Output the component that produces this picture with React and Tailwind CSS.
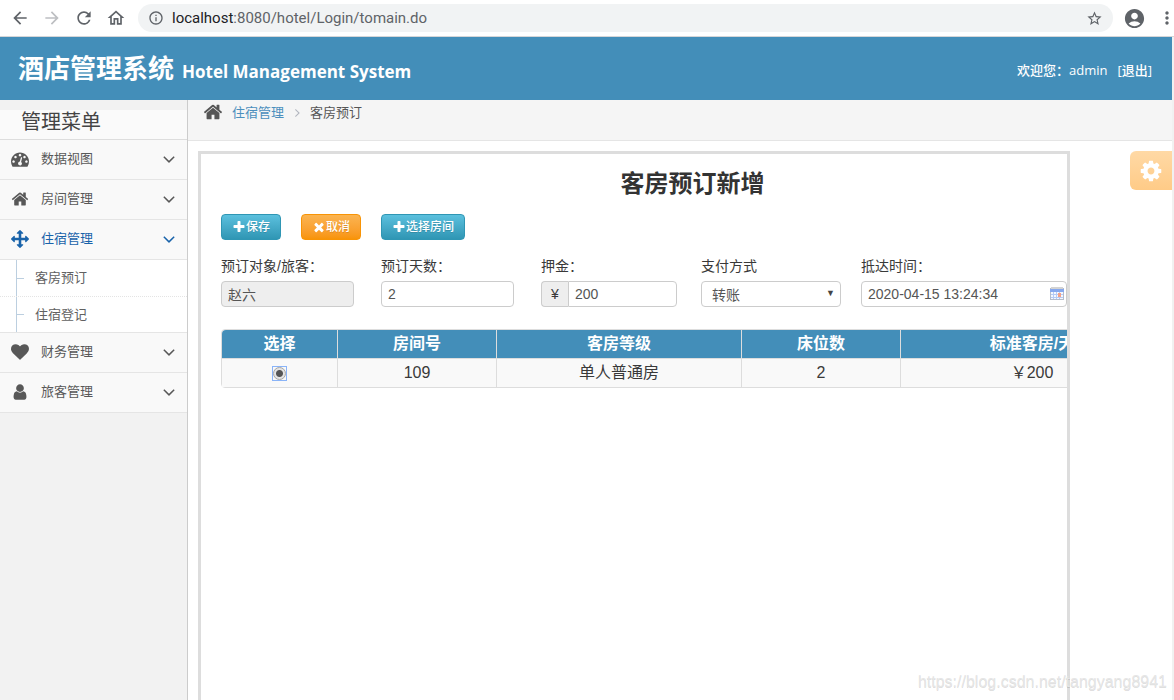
import React from "react";
import {
    MdAccountCircle,
    MdArrowBack,
    MdArrowForward,
    MdInfoOutline,
    MdMoreVert,
    MdOutlineHome,
    MdRefresh,
    MdStarBorder,
} from "react-icons/md";

const icons = {
    dashboard:
        "M384 1152q0-53-37.5-90.5t-90.5-37.5-90.5 37.5-37.5 90.5 37.5 90.5 90.5 37.5 90.5-37.5 37.5-90.5zm192-448q0-53-37.5-90.5t-90.5-37.5-90.5 37.5-37.5 90.5 37.5 90.5 90.5 37.5 90.5-37.5 37.5-90.5zm428 481l101-382q6-26-7.5-48.5t-38.5-29.5-48 6.5-30 39.5l-101 382q-60 5-107 43.5t-63 98.5q-20 77 20 146t117 89 146-20 89-117q16-60-6-117t-72-91zm660-33q0-53-37.5-90.5t-90.5-37.5-90.5 37.5-37.5 90.5 37.5 90.5 90.5 37.5 90.5-37.5 37.5-90.5zm-640-640q0-53-37.5-90.5t-90.5-37.5-90.5 37.5-37.5 90.5 37.5 90.5 90.5 37.5 90.5-37.5 37.5-90.5zm448 192q0-53-37.5-90.5t-90.5-37.5-90.5 37.5-37.5 90.5 37.5 90.5 90.5 37.5 90.5-37.5 37.5-90.5zm320 448q0 261-141 483-19 29-54 29h-1402q-35 0-54-29-141-221-141-483 0-182 71-348t191-286 286-191 348-71 348 71 286 191 191 286 71 348z",
    home: "M1472 992v480q0 26-19 45t-45 19h-384v-384h-256v384h-384q-26 0-45-19t-19-45v-480q0-1 .5-3t.5-3l575-474 575 474q1 2 1 6zm223-69l-62 74q-8 9-21 11h-3q-13 0-21-7l-692-577-692 577q-12 8-24 7-13-2-21-11l-62-74q-8-10-7-23.5t11-21.5l719-599q32-26 76-26t76 26l244 204v-195q0-14 9-23t23-9h192q14 0 23 9t9 23v408l219 182q10 8 11 21.5t-7 23.5z",
    arrows: "M1792 896q0 26-19 45l-256 256q-19 19-45 19t-45-19-19-45v-128h-384v384h128q26 0 45 19t19 45-19 45l-256 256q-19 19-45 19t-45-19l-256-256q-19-19-19-45t19-45 45-19h128v-384h-384v128q0 26-19 45t-45 19-45-19l-256-256q-19-19-19-45t19-45l256-256q19-19 45-19t45 19 19 45v128h384v-384h-128q-26 0-45-19t-19-45 19-45l256-256q19-19 45-19t45 19l256 256q19 19 19 45t-19 45-45 19h-128v384h384v-128q0-26 19-45t45-19 45 19l256 256q19 19 19 45z",
    heart: "M896 1664q-26 0-44-18l-624-602q-10-8-27.5-26t-55.5-65.5-68-97.5-53.5-121-23.5-138q0-220 127-344t351-124q62 0 126.5 21.5t120 58 95.5 68.5 76 68q36-36 76-68t95.5-68.5 120-58 126.5-21.5q224 0 351 124t127 344q0 221-229 450l-623 600q-18 18-44 18z",
    user: "M1536 1399q0 109-62.5 187t-150.5 78h-854q-88 0-150.5-78t-62.5-187q0-85 8.5-160.5t31.5-152 58.5-131 94-89 134.5-34.5q131 128 313 128t313-128q76 0 134.5 34.5t94 89 58.5 131 31.5 152 8.5 160.5zm-256-887q0 159-112.5 271.5t-271.5 112.5-271.5-112.5-112.5-271.5 112.5-271.5 271.5-112.5 271.5 112.5 112.5 271.5z",
    cog: "M1152 896q0-106-75-181t-181-75-181 75-75 181 75 181 181 75 181-75 75-181zm512-109v222q0 12-8 23t-20 13l-185 28q-19 54-39 91 35 50 107 138 10 12 10 25t-9 23q-27 37-99 108t-94 71q-12 0-26-9l-138-108q-44 23-91 38-16 136-29 186-7 28-36 28h-222q-14 0-24.5-8.5t-11.5-21.5l-28-184q-49-16-90-37l-141 107q-10 9-25 9-14 0-25-11-126-114-165-168-7-10-7-23 0-12 8-23 15-21 51-66.5t54-70.5q-27-50-41-99l-183-27q-13-2-21-12.5t-8-23.5v-222q0-12 8-23t19-13l186-28q14-46 39-92-40-57-107-138-10-12-10-24 0-10 9-23 26-36 98.5-107.5t94.5-71.5q13 0 26 10l138 107q44-23 91-38 16-136 29-186 7-28 36-28h222q14 0 24.5 8.5t11.5 21.5l28 184q49 16 90 37l142-107q9-9 24-9 13 0 25 10 129 119 165 170 7 8 7 22 0 12-8 23-15 21-51 66.5t-54 70.5q26 50 41 98l183 28q13 2 21 12.5t8 23.5z",
    plus: "M1600 736v192q0 40-28 68t-68 28h-416v416q0 40-28 68t-68 28h-192q-40 0-68-28t-28-68v-416h-416q-40 0-68-28t-28-68v-192q0-40 28-68t68-28h416v-416q0-40 28-68t68-28h192q40 0 68 28t28 68v416h416q40 0 68 28t28 68z",
    times: "M1490 1322q0 40-28 68l-136 136q-28 28-68 28t-68-28l-294-294-294 294q-28 28-68 28t-68-28l-136-136q-28-28-28-68t28-68l294-294-294-294q-28-28-28-68t28-68l136-136q28-28 68-28t68 28l294 294 294-294q28-28 68-28t68 28l136 136q28 28 28 68t-28 68l-294 294 294 294q28 28 28 68z",
    angleDown:
        "M1395 736q0 13-10 23l-466 466q-10 10-23 10t-23-10l-466-466q-10-10-10-23t10-23l50-50q10-10 23-10t23 10l393 393 393-393q10-10 23-10t23 10l50 50q10 10 10 23z",
};

const menus = [
    { name: "数据视图", icon: "dashboard" },
    { name: "房间管理", icon: "home" },
    {
        name: "住宿管理",
        icon: "arrows",
        open: true,
        children: ["客房预订", "住宿登记"],
    },
    { name: "财务管理", icon: "heart" },
    { name: "旅客管理", icon: "user" },
];

const Icon = ({ name, className }) => (
    <svg
        viewBox="0 0 1792 1792"
        fill="currentColor"
        aria-hidden="true"
        className={`shrink-0 ${className}`}
    >
        <path d={icons[name]} />
    </svg>
);

const BrowserBar = () => (
    <div className="flex h-[37px] shrink-0 items-center border-b border-[#d5d6d8] bg-white pl-2.5 text-[#5f6368]">
        <div className="flex gap-3">
            <button aria-label="后退"><MdArrowBack size={20} /></button>
            <button aria-label="前进" className="text-[#bdbfc2]"><MdArrowForward size={20} /></button>
            <button aria-label="刷新"><MdRefresh size={20} /></button>
            <button aria-label="主页"><MdOutlineHome size={20} /></button>
        </div>
        <div className="ml-3 flex h-7 flex-1 items-center rounded-full bg-[#f1f3f4] pr-2.5 pl-2.5">
            <MdInfoOutline size={16} />
            <p className="ml-2 flex-1 font-[Roboto,sans-serif] text-[15px]">
                <span className="text-[#202124]">localhost</span>
                :8080/hotel/Login/tomain.do
            </p>
            <button aria-label="收藏"><MdStarBorder size={17} /></button>
        </div>
        <MdAccountCircle size={23} className="ml-2.5" />
        <button aria-label="更多" className="ml-3.5 flex w-3.5 justify-center">
            <MdMoreVert size={20} className="shrink-0" />
        </button>
    </div>
);

const Header = () => (
    <header className="flex h-[63px] shrink-0 items-center justify-between bg-[#438eb9] pr-5 pl-[18px] text-white">
        <h1 className="flex items-baseline gap-2 font-bold">
            <span className="text-[26px]">酒店管理系统</span>
            <span className="text-[17px]">Hotel Management System</span>
        </h1>
        <p className="mt-1 flex gap-2.5 text-[13px] font-medium">
            <span>欢迎您：admin</span>
            <a href="#logout">[退出]</a>
        </p>
    </header>
);

const Sidebar = () => (
    <aside className="w-[188px] shrink-0 border-r border-[#ccc] bg-[#f2f2f2] pt-2.5 text-[13px] text-[#585858]">
        <h2 className="flex h-[30px] items-center border-b border-[#ddd] bg-[#fafafa] pb-1.5 pl-[21px] text-xl text-[#444]">
            管理菜单
        </h2>
        <nav>
            {menus.map((menu) => (
                <div key={menu.name} className="border-b border-[#e5e5e5]">
                    <button
                        className={`flex h-[39px] w-full items-center bg-[#f9f9f9] pr-2 pb-0.5 pl-[11px] ${menu.open ? "text-[#1963aa]" : ""}`}
                    >
                        <Icon name={menu.icon} className="size-[18px]" />
                        <span className="ml-3 flex-1 text-left">{menu.name}</span>
                        <Icon name="angleDown" className="size-5" />
                    </button>
                    {/* Submenu */}
                    {menu.children && (
                        <ul className="border-t border-[#e5e5e5] bg-white text-[#616161]">
                            {menu.children.map((child) => (
                                <li
                                    key={child}
                                    className="flex h-9 border-t border-dotted border-[#e4e4e4] pl-4 first:border-none"
                                >
                                    <a
                                        href="#menu"
                                        className="flex items-center border-l border-[#bccfe0]"
                                    >
                                        <span className="mr-[11px] w-[7px] border-t border-[#bccfe0]" />
                                        {child}
                                    </a>
                                </li>
                            ))}
                        </ul>
                    )}
                </div>
            ))}
        </nav>
    </aside>
);

const Field = ({ id, label, children }) => (
    <div>
        <label htmlFor={id} className="block h-[25px] text-sm leading-5">
            {label}
        </label>
        {children}
    </div>
);

const inputStyle =
    "h-[26px] rounded-sm border border-[#ccc] px-1.5 text-sm text-[#555]";
const buttonStyle =
    "flex h-[26px] items-center justify-center rounded-sm border text-xs font-medium text-white text-shadow-2xs";
const infoStyle =
    "border-[#2f96b4] bg-linear-to-b from-[#5bc0de] to-[#2f96b4]";

const BookingForm = () => (
    <form className="w-[943px] text-[#393939]">
        <h2 className="pt-3 text-center text-2xl leading-9 font-bold text-[#333]">
            客房预订新增
        </h2>
        <div className="mt-3 flex gap-5">
            <button type="button" className={`${buttonStyle} ${infoStyle} w-[60px]`}>
                <Icon name="plus" className="size-3.5" />
                保存
            </button>
            <button
                type="button"
                className={`${buttonStyle} w-[60px] border-[#f89406] bg-linear-to-b from-[#fbb450] to-[#f89406]`}
            >
                <Icon name="times" className="size-3.5" />
                取消
            </button>
            <button type="button" className={`${buttonStyle} ${infoStyle} w-[84px]`}>
                <Icon name="plus" className="size-3.5" />
                选择房间
            </button>
        </div>

        <div className="mt-4 grid grid-cols-[repeat(4,160px)_auto]">
            <Field id="guest" label="预订对象/旅客：">
                <input
                    id="guest"
                    readOnly
                    value="赵六"
                    className={`${inputStyle} w-[133px] bg-[#eee]`}
                />
            </Field>
            <Field id="days" label="预订天数：">
                <input id="days" defaultValue="2" className={`${inputStyle} w-[133px]`} />
            </Field>
            <Field id="deposit" label="押金：">
                <div className="flex">
                    <span className="flex h-[26px] w-[27px] items-center justify-center rounded-l-sm border border-r-0 border-[#ccc] bg-[#eee] text-sm">
                        ¥
                    </span>
                    <input
                        id="deposit"
                        defaultValue="200"
                        className={`${inputStyle} w-[109px] rounded-l-none`}
                    />
                </div>
            </Field>
            <Field id="payment" label="支付方式">
                <div className="relative w-[140px]">
                    <select
                        id="payment"
                        className={`${inputStyle} w-full appearance-none bg-white px-2.5 pt-0.5`}
                    >
                        <option>转账</option>
                    </select>
                    <span className="pointer-events-none absolute top-1.5 right-1.5 text-[9px] leading-3 text-[#444]">
                        ▼
                    </span>
                </div>
            </Field>
            <Field id="arrival" label="抵达时间：">
                <div className="relative w-[206px]">
                    <input
                        id="arrival"
                        defaultValue="2020-04-15 13:24:34"
                        className={`${inputStyle} w-full`}
                    />
                    <svg
                        viewBox="0 0 14 13"
                        aria-hidden="true"
                        className="absolute top-1.5 right-[3px] h-[13px] w-3.5"
                    >
                        <path fill="#b4bccb" d="M0 1h14v12H0z" />
                        <path fill="#d3d3d3" d="M1 0h12v2H1z" />
                        <path fill="#86a8ee" d="M0 2h14v3H0z" />
                        <path fill="#f4f8ff" d="M1 5h12v7H1z" />
                        <path
                            stroke="#b5cbf6"
                            d="M3.5 5v7M6.5 5v7M9.5 5v7M1 7.5h12M1 10.5h12"
                        />
                        <path fill="#f2a18a" d="M8 6h3v4H8z" />
                    </svg>
                </div>
            </Field>
        </div>

        <table className="mt-[22px] w-full table-fixed border-separate border-spacing-0 rounded border border-[#ddd] text-center">
            <colgroup>
                <col className="w-[115px]" />
                <col className="w-[159px]" />
                <col className="w-[245px]" />
                <col className="w-[159px]" />
                <col />
            </colgroup>
            <thead>
                <tr className="h-7 bg-[#438eb9] text-white">
                    <th className="rounded-tl">选择</th>
                    <th className="border-l border-[#ddd]">房间号</th>
                    <th className="border-l border-[#ddd]">客房等级</th>
                    <th className="border-l border-[#ddd]">床位数</th>
                    <th className="border-l border-[#ddd]">标准客房/天</th>
                </tr>
            </thead>
            <tbody>
                <tr className="h-[29px] bg-[#f9f9f9] [&>td]:border-t [&>td]:border-[#ddd]">
                    <td>
                        <span className="mx-auto block size-[15px] border border-[#8ab4f8] bg-[#f9f9f9]">
                            <input
                                type="radio"
                                name="room"
                                defaultChecked
                                aria-label="109"
                                className="block size-[13px] appearance-none rounded-full border border-[#a5a5a5] bg-[radial-gradient(circle,#555_3px,#e4e4e4_4px)]"
                            />
                        </span>
                    </td>
                    <td className="border-l">109</td>
                    <td className="border-l">单人普通房</td>
                    <td className="border-l">2</td>
                    <td className="border-l">￥200</td>
                </tr>
            </tbody>
        </table>
    </form>
);

const App = () => {
    return (
        <div className="relative flex h-screen flex-col overflow-hidden bg-[#f1f1f1] font-['Liberation_Sans','Noto_Sans_CJK_SC',sans-serif]">
            <BrowserBar />
            <div className="mr-0.5 flex min-h-0 flex-1 flex-col bg-white font-['Open_Sans','Noto_Sans_CJK_SC',sans-serif]">
                <Header />
                <div className="flex min-h-0 flex-1">
                    <Sidebar />
                    <main className="flex min-w-0 flex-1 flex-col">
                        {/* Breadcrumb */}
                        <nav className="flex h-[41px] shrink-0 items-start border-b border-[#e5e5e5] bg-[#f5f5f5] pt-0.5 pl-[15px] text-[13px] leading-5 text-[#555]">
                            <Icon name="home" className="size-5" />
                            <a href="#lodging" className="ml-[9px] text-[#4c8fbd]">
                                住宿管理
                            </a>
                            <Icon
                                name="angleDown"
                                className="mx-1.5 mt-1 size-3.5 -rotate-90 text-[#b2b6bf]"
                            />
                            <span>客房预订</span>
                        </nav>
                        <div className="flex min-h-0 flex-1 items-start pt-2.5 pl-2.5">
                            <section className="h-full min-w-0 flex-1 overflow-hidden border-3 border-b-0 border-[#ddd] px-5 font-['Liberation_Sans','Noto_Sans_CJK_SC',sans-serif]">
                                <BookingForm />
                            </section>
                            <button
                                aria-label="设置"
                                className="ml-[60px] flex h-[39px] w-[42px] shrink-0 items-center justify-center rounded-l-md bg-linear-to-b from-[#ffd9a5] to-[#ffcb87] text-white"
                            >
                                <Icon name="cog" className="size-6" />
                            </button>
                        </div>
                    </main>
                </div>
            </div>
            <p className="absolute right-[7px] bottom-1.5 text-base text-[#e6e6e6] text-shadow-2xs">
                https://blog.csdn.net/tangyang8941
            </p>
        </div>
    );
};

export default App;
